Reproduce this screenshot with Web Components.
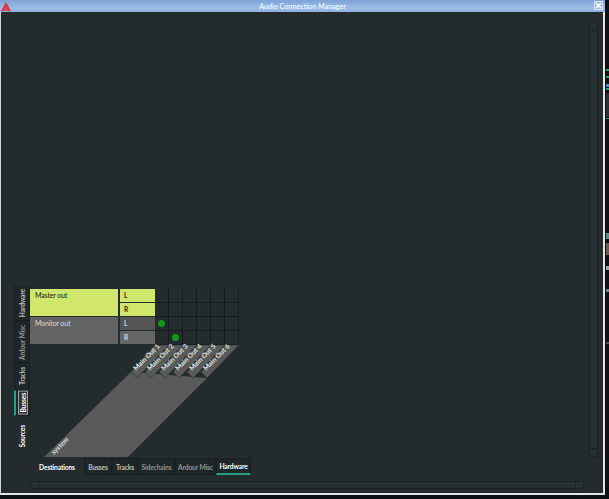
<!DOCTYPE html>
<html>
<head>
<meta charset="utf-8">
<title>Audio Connection Manager</title>
<style>
    html, body { margin: 0; padding: 0; background: #101416; overflow: hidden; }
    body { font-family: Lato, "Liberation Sans", sans-serif; }
</style>
</head>
<body>
<acm-window title-text="Audio Connection Manager">
    <acm-matrix></acm-matrix>
</acm-window>

<script>
// Window frame: title bar, body and the sliver of desktop to the right of it
class AcmWindow extends HTMLElement {
    constructor(){
        super();
        var template = this.attachShadow({mode:'open'});
        template.innerHTML = `
            <style>
                :host { display: block; width: 609px; height: 499px;
                    background:
                        linear-gradient(#1fa866, #1fa866) 100% 69px / 3px 2px no-repeat,
                        linear-gradient(#1fa866, #1fa866) 100% 76px / 3px 2px no-repeat,
                        linear-gradient(#4a90c8, #4a90c8) 100% 84px / 3px 3px no-repeat,
                        linear-gradient(#1fa866, #1fa866) 100% 88px / 3px 2px no-repeat,
                        linear-gradient(#1fa866, #1fa866) 100% 118px / 3px 1px no-repeat,
                        linear-gradient(#2a3036, #2a3036) 100% 93px / 3px 24px no-repeat,
                        linear-gradient(#5f8f88, #5f8f88) 100% 233px / 3px 6px no-repeat,
                        linear-gradient(#6a5a50, #6a5a50) 100% 243px / 3px 12px no-repeat,
                        linear-gradient(#9aa4a8, #9aa4a8) 100% 266px / 3px 4px no-repeat,
                        linear-gradient(#6f7f95, #6f7f95) 100% 289px / 3px 3px no-repeat,
                        linear-gradient(#4a5056, #4a5056) 100% 342px / 3px 2px no-repeat,
                        #0e1214; }
                .frame { display: flex; flex-direction: column; width: 605px; height: 495px; box-sizing: border-box;
                    border-right: 2px solid #e4e6e6; border-bottom: 2px solid #e4e6e6; border-left: 1px solid #cfd3d3; }
                .title { display: flex; align-items: center; justify-content: center; position: relative; height: 12px; flex: none;
                    margin-left: -1px; margin-right: -2px;
                    background: linear-gradient(#7ea3d6, #9dbde6 70%, #8fb0de); color: #fff; font-size: 7.2px; }
                .logo { position: absolute; left: 1px; top: 2px; width: 10px; height: 9px; }
                .close { position: absolute; right: 2px; top: 1px; width: 9px; height: 9px; background: #9fbadf; border: 1px solid #d7e3f3; box-sizing: border-box; display: flex; }
                .close svg { width: 7px; height: 7px; }
                .body { flex: 1; min-height: 0; background: #232b2d; }
            </style>
            <div class="frame">
                <div class="title">
                    <svg class="logo" viewBox="0 0 10 9"><path d="M5 0 L10 9 L0 9 Z" fill="#d9344a"/><path d="M5 4 L7 9 L3 9 Z" fill="#e0505f"/></svg>
                    <span></span>
                    <div class="close"><svg viewBox="0 0 7 7"><path d="M1 1 L6 6 M6 1 L1 6" stroke="#fff" stroke-width="1.6"/></svg></div>
                </div>
                <div class="body"><slot></slot></div>
            </div>
        `;
    }

    connectedCallback() {
        this.shadowRoot.querySelector('span').textContent = this.getAttribute('title-text');
    }
}
customElements.define('acm-window', AcmWindow);

// A single tab, horizontal or rotated
class AcmTab extends HTMLElement {
    constructor(){
        super();
        var template = this.attachShadow({mode:'open'});
        template.innerHTML = `
            <style>
                :host { display: flex; align-items: center; justify-content: center; box-sizing: border-box;
                    background: #1f2628; border: 1px solid #1a2022; color: #bcc0c0; font-size: 6.7px; letter-spacing: -.15px; font-weight: 700; white-space: nowrap; }
                :host([dim]) { color: #8f9696; }
                :host([plain]) { background: none; border-color: transparent; color: #fff; }
                :host([active]) { color: #fff; border-bottom: 2px solid #2a9d86; }
                :host([vertical]) span { writing-mode: vertical-rl; transform: rotate(180deg); }
                :host([vertical][active]) { border-bottom: 1px solid #1a2022; border-left: 2px solid #2a9d86; }
                :host([focused]) span { outline: 1px solid #9aa0a0; outline-offset: 0; padding: 1px 0; background: #2e3638; }
            </style>
            <span><slot></slot></span>
        `;
    }
}
customElements.define('acm-tab', AcmTab);

// Plain scrollbar trough with a stepper button at one end
class AcmScroll extends HTMLElement {
    constructor(){
        super();
        var template = this.attachShadow({mode:'open'});
        template.innerHTML = `
            <style>
                :host { display: flex; box-sizing: border-box; background: #263032; border: 1px solid #1b2224; border-radius: 2px; }
                :host([vertical]) { flex-direction: column; }
                i { display: block; flex: none; width: 7px; height: 7px; border-right: 1px solid #1b2224; }
                :host([vertical]) i { width: auto; height: 7px; border-right: 0; border-bottom: 1px solid #1b2224; }
                b { flex: 1; }
                i.end { border-right: 0; border-left: 1px solid #1b2224; }
                :host([vertical]) i.end { border-left: 0; border-bottom: 0; border-top: 1px solid #1b2224; }
            </style>
            <i></i><b></b><i class="end"></i>
        `;
    }
}
customElements.define('acm-scroll', AcmScroll);

// One bus group of the port matrix: name block, ports, and connection cells
class AcmGroup extends HTMLElement {
    constructor(){
        super();
        var template = this.attachShadow({mode:'open'});
        template.innerHTML = `
            <style>
                :host { display: grid; grid-template-columns: 89px 36px 84px; width: 209px; height: 28px; font-size: 7.1px; letter-spacing: -.2px; color: #20260f;
                    --name: #d0e66c; --port: #d0e66c; --port2: #d0e66c; }
                :host([kind="monitor"]) { color: #d8dada; --name: #636363; --port: #555; --port2: #666; }
                .name { background: var(--name); padding: 2px 5px; margin: 0 1px 1px 0; }
                .ports { display: grid; grid-template-rows: 14px 14px; }
                .ports div { display: flex; align-items: center; padding-left: 4px; font-weight: 700; font-size: 6.5px;
                    background: var(--port); border-left: 1px solid #232b2d; border-bottom: 1px solid #232b2d; box-sizing: border-box; }
                .ports div + div { background: var(--port2); }
                .cells { display: grid; grid-template-columns: repeat(6, 14px); grid-template-rows: 14px 14px; }
                .cells div { display: flex; align-items: center; justify-content: center; box-sizing: border-box;
                    border-right: 1px solid #161b1d; border-bottom: 1px solid #161b1d; }
                .dot { width: 7px; height: 7px; border-radius: 50%; background: #13981b; margin: -1px 0 0 0; }
            </style>
            <div class="name"><slot></slot></div>
            <div class="ports"><div>L</div><div>R</div></div>
            <div class="cells"></div>
        `;
    }

    connectedCallback() {
        let root = this.shadowRoot;
        let anchor = root.querySelector('.cells');
        let on = JSON.parse(this.getAttribute('on') || '[]');
        // 2 rows of 6 outputs
        for (let i = 0; i < 12; i++) {
            let cell = document.createElement('div');
            if (on.indexOf(i) >= 0) {
                let dot = document.createElement('span');
                dot.className = 'dot';
                cell.appendChild(dot);
            }
            anchor.appendChild(cell);
        }
    }
}
customElements.define('acm-group', AcmGroup);

// Slanted column headers under the grid
class AcmHeaders extends HTMLElement {
    constructor(){
        super();
        var template = this.attachShadow({mode:'open'});
        let tabs = '';
        for (let i = 0; i < 6; i++) {
            let x = 125 + i * 14;
            tabs += `<polygon points="${x},0 ${x + 14},0 ${x - 18},33 ${x - 24},27" fill="#5a5a5a" stroke="#2a3234" stroke-width=".6"/>`;
            tabs += `<text transform="translate(${x - 19},26) rotate(-45)">Main Out ${i + 1}</text>`;
        }
        template.innerHTML = `
            <style>
                :host { display: block; width: 210px; height: 113px; }
                svg { display: block; overflow: visible; }
                text { font-family: Lato, "Liberation Sans", sans-serif; font-size: 6.8px; font-weight: 700; fill: #dfe1e1; }
            </style>
            <svg width="210" height="113" viewBox="0 0 210 113">
                <polygon points="101,27 177,33 98,112 14,112" fill="#5a5a5a"/>
                ${tabs}
                <text transform="translate(24,110) rotate(-45)">system</text>
            </svg>
        `;
    }
}
customElements.define('acm-headers', AcmHeaders);

// Whole Audio Connection Manager page
class AcmMatrix extends HTMLElement {
    constructor(){
        super();
        var template = this.attachShadow({mode:'open'});
        template.innerHTML = `
            <style>
                :host { display: grid; grid-template-columns: 1fr 9px; grid-template-rows: 1fr 8px; column-gap: 5px; row-gap: 6px;
                    height: 100%; box-sizing: border-box; padding: 10px 5px 4px 0; }
                .main { display: flex; flex-direction: column; justify-content: flex-end; min-height: 0; }
                .row { display: flex; align-items: flex-start; padding-left: 11px; }
                .side { display: flex; flex-direction: column; width: 18px; flex: none; }
                .side acm-tab { width: 16px; margin-left: 2px; }
                .table { margin: 3px 0 0 0; }
                .bottom { display: flex; height: 17px; padding-left: 29px; }
                .bottom acm-tab { height: 17px; }
                .hs { margin-left: 29px; }
                .vs { margin-bottom: 18px; }
            </style>
            <div class="main">
                <div class="row">
                    <div class="side">
                        <acm-tab vertical style="height:35px">Hardware</acm-tab>
                        <acm-tab vertical dim style="height:42px">Ardour Misc</acm-tab>
                        <acm-tab vertical style="height:27px">Tracks</acm-tab>
                        <acm-tab vertical active focused style="height:26px">Busses</acm-tab>
                        <acm-tab vertical plain style="height:41px">Sources</acm-tab>
                    </div>
                    <div class="table">
                        <acm-group on="[]">Master out</acm-group>
                        <acm-group kind="monitor" on="[0,7]">Monitor out</acm-group>
                        <acm-headers></acm-headers>
                    </div>
                </div>
                <div class="bottom">
                    <acm-tab plain style="width:54px">Destinations</acm-tab>
                    <acm-tab style="width:28px">Busses</acm-tab>
                    <acm-tab style="width:26px">Tracks</acm-tab>
                    <acm-tab dim style="width:37px">Sidechains</acm-tab>
                    <acm-tab dim style="width:41px">Ardour Misc</acm-tab>
                    <acm-tab active style="width:35px">Hardware</acm-tab>
                </div>
            </div>
            <acm-scroll vertical class="vs"></acm-scroll>
            <acm-scroll class="hs"></acm-scroll>
        `;
    }
}
customElements.define('acm-matrix', AcmMatrix);
</script>
</body>
</html>
